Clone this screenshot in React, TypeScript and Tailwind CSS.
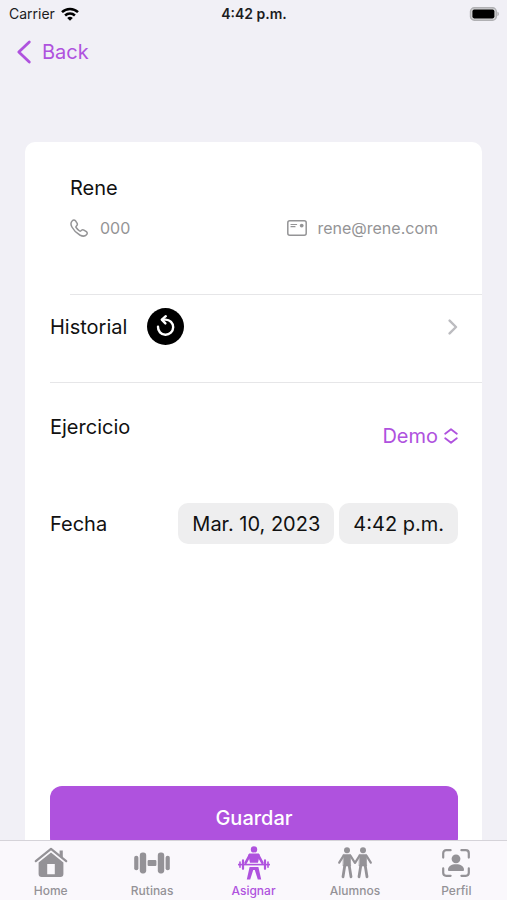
import { useState } from "react";
import type { ReactNode } from "react";

function HomeIcon() {
  return (
    <svg width="34" height="32" viewBox="0 0 34 32" fill="currentColor" aria-hidden="true">
      <path d="M1.8 14.2 17 1.8l15.2 12.4" fill="none" stroke="currentColor" strokeWidth="2.2" strokeLinecap="round" strokeLinejoin="round" />
      <path d="M25.6 3.4h3.2v8l-3.2-2.6Z" />
      <path fillRule="evenodd" d="M17 5.4 29.4 15.600V27a3 3 0 0 1-3 3H7.600a3 3 0 0 1-3-3V15.600ZM13.200 17v10.200h7.600V17Z" />
    </svg>
  );
}

function DumbbellIcon() {
  return (
    <svg width="36" height="32" viewBox="0 0 36 32" fill="currentColor" aria-hidden="true">
      <rect x="0.2" y="8.8" width="4.2" height="14.4" rx="2" />
      <rect x="5.8" y="5.6" width="6.4" height="20.8" rx="2.8" />
      <rect x="13.6" y="13" width="8.8" height="6" rx="1" />
      <rect x="23.8" y="5.6" width="6.4" height="20.8" rx="2.8" />
      <rect x="31.6" y="8.8" width="4.2" height="14.4" rx="2" />
    </svg>
  );
}

function LifterIcon() {
  return (
    <svg width="34" height="36" viewBox="0 0 34 36" fill="currentColor" stroke="currentColor" aria-hidden="true">
      <circle cx="17" cy="4.4" r="3.2" stroke="none" />
      <path d="M13.4 8.6h7.2c1.4 0 2 .6 2 2l-1.600 7.200h-8L11.400 10.600c0-1.400.6-2 2-2Z" stroke="none" />
      <path d="m12.800 10.200-4.200 7.600M21.200 10.200l4.200 7.600" strokeWidth="2.600" strokeLinecap="round" fill="none" />
      <path d="M1 19.600h32" strokeWidth="1.600" />
      <path d="M3 17v5.200M31 17v5.200" strokeWidth="1.600" strokeLinecap="round" />
      <path d="M6 15.400v8.400M28 15.400v8.400" strokeWidth="2.200" strokeLinecap="round" />
      <path d="M12.600 22h8.800l2.800 12.400h-3.400L17.800 25h-1.600l-3 9.400H9.800Z" stroke="none" />
    </svg>
  );
}

function StudentsIcon() {
  return (
    <svg width="36" height="32" viewBox="0 0 36 32" aria-hidden="true">
      {[10, 26].map((x) => (
        <g key={x} transform={`translate(${x} 0)`} fill="none" stroke="currentColor" strokeLinecap="round" strokeLinejoin="round">
          <circle cx="0" cy="3.200" r="3" fill="currentColor" stroke="none" />
          <path d="M-3.400 7.400h6.800L3.600 19h-7.200Z" fill="currentColor" strokeWidth="0.600" />
          <path d="M-2.200 18.500-4 29.800M2.200 18.500 4 29.800" strokeWidth="2.800" />
          <path d="m-3.400 8.700-4.400 7M3.400 8.700l4.400 7" strokeWidth="2.200" />
        </g>
      ))}
    </svg>
  );
}

function ProfileIcon() {
  return (
    <svg width="28" height="28" viewBox="0 0 28 28" fill="currentColor" aria-hidden="true">
      <path d="M1.2 8.600V4.200a3 3 0 0 1 3-3H8.600M19.400 1.200h4.400a3 3 0 0 1 3 3v4.400M26.800 19.400v4.400a3 3 0 0 1-3 3h-4.400M8.600 26.800H4.200a3 3 0 0 1-3-3v-4.400" fill="none" stroke="currentColor" strokeWidth="2.200" strokeLinecap="round" />
      <circle cx="14" cy="9.800" r="4.400" />
      <path d="M6 20.800c0-3.500 3.400-5.500 8-5.500s8 2 8 5.500c0 .8-.5 1.200-1.200 1.200H7.200C6.500 22 6 21.600 6 20.800Z" />
    </svg>
  );
}

function StatusBar() {
  return (
    <div className="grid h-7 grid-cols-3 items-center pr-2 pl-[9px] text-sm leading-4 text-[#1c1c1e]">
      <div className="flex items-center gap-1.5">
        <span>Carrier</span>
        <svg width="18" height="14" viewBox="0 0 18 14" fill="none" stroke="#000" strokeWidth="2.5" aria-hidden="true">
          <path d="M1 5.2a11.4 11.4 0 0 1 16 0" />
          <path d="M4.1 8.5a7 7 0 0 1 9.8 0" />
          <path d="M9 13.8 6.2 11a4 4 0 0 1 5.6 0Z" fill="#000" stroke="none" />
        </svg>
      </div>
      <span className="text-center font-semibold">4:42 p.m.</span>
      <svg className="justify-self-end" width="30" height="14" viewBox="0 0 30 14" aria-hidden="true">
        <rect x="1.5" y="0.8" width="25.8" height="12.4" rx="3.8" fill="#d4d4d6" stroke="#b0b0b3" strokeWidth="1.4" />
        <rect x="3.4" y="2.6" width="22" height="8.8" rx="1.8" fill="#000" />
        <path d="M28.4 4.8c1 .3 1.5 1.200 1.5 2.200s-.5 1.900-1.500 2.200Z" fill="#b0b0b3" />
      </svg>
    </div>
  );
}

type Tab = { label: string; icon: ReactNode };

const tabs: Tab[] = [
  { label: "Home", icon: <HomeIcon /> },
  { label: "Rutinas", icon: <DumbbellIcon /> },
  { label: "Asignar", icon: <LifterIcon /> },
  { label: "Alumnos", icon: <StudentsIcon /> },
  { label: "Perfil", icon: <ProfileIcon /> },
];

export default function App() {
  const [exercise, setExercise] = useState("Demo");
  const [activeTab, setActiveTab] = useState("Asignar");

  return (
    <div className="flex h-screen flex-col bg-[#f1f0f6] font-['Inter','Liberation_Sans',sans-serif] text-[#111]">
      <StatusBar />

      {/* Navigation */}
      <nav className="flex h-12 shrink-0 items-center px-4">
        <a href="#" className="flex items-center gap-2.5 text-xl leading-7 text-[#af52de]">
          <svg width="16" height="24" viewBox="0 0 16 24" fill="none" stroke="currentColor" strokeWidth="2.8" strokeLinecap="round" strokeLinejoin="round" aria-hidden="true">
            <path d="M13.3 2 2.8 12l10.5 10" />
          </svg>
          Back
        </a>
      </nav>

      {/* Assignment form */}
      <main className="min-h-0 flex-1 overflow-hidden px-[25px] pt-[66px]">
        <form className="min-h-full rounded-t-[10px] bg-white text-xl leading-7" onSubmit={(e) => e.preventDefault()}>
          <section className="ml-[45px] border-b border-[#e6e6e8] pt-8 pr-11 pb-[54px]">
            <h1>Rene</h1>
            <div className="mt-3.5 flex items-center justify-between text-base leading-6 text-[#949496]">
              <span className="flex items-center gap-3">
                <svg width="18" height="18" viewBox="0 0 18 18" fill="none" stroke="currentColor" strokeWidth="1.5" strokeLinejoin="round" aria-hidden="true">
                  <path d="M2.3 1.7C3.3.6 4.6.6 5.4 1.7L7 4.2c.6.9.5 1.6-.2 2.4l-.7.8c-.3.4-.3.7 0 1.1.9 1.3 2.2 2.6 3.5 3.5.4.3.8.3 1.1 0l.8-.7c.8-.7 1.5-.8 2.4-.2l2.5 1.6c1.1.8 1.100 2.100.1 3.100-1.600 1.700-3.900 1.700-6.700.2C6.500 14.100 3.600 11.200 1.900 8 .6 5.500.7 3.200 2.300 1.700Z" />
                </svg>
                000
              </span>
              <span className="flex items-center gap-2.5">
                <svg width="20" height="16" viewBox="0 0 20 16" fill="none" stroke="currentColor" aria-hidden="true">
                  <rect x="0.8" y="0.8" width="18.4" height="14.4" rx="2" strokeWidth="1.5" />
                  <path d="M4 4.5h5.600M4 6.700h4" strokeWidth="1.200" strokeLinecap="round" />
                  <circle cx="14.7" cy="5.6" r="1.9" fill="currentColor" stroke="none" />
                </svg>
                rene@rene.com
              </span>
            </div>
          </section>

          <section className="ml-[25px] border-b border-[#e6e6e8] pt-[13px] pr-6 pb-[37px]">
            <button type="button" className="flex w-full items-center">
              <span>Historial</span>
              <svg className="ml-5" width="37" height="37" viewBox="0 0 37 37" aria-hidden="true">
                <circle cx="18.5" cy="18.5" r="18.5" fill="#000" />
                <path d="M11 18.800a7.600 7.600 0 1 0 7.600-7.200h-3" fill="none" stroke="#fff" strokeWidth="2.400" strokeLinecap="round" />
                <path d="m18.800 8.200-4 3.400 3.600 3.800" fill="none" stroke="#fff" strokeWidth="2.400" strokeLinecap="round" strokeLinejoin="round" />
              </svg>
              <svg className="ml-auto" width="10" height="16" viewBox="0 0 10 16" fill="none" stroke="#bcbcc0" strokeWidth="2.4" strokeLinecap="round" strokeLinejoin="round" aria-hidden="true">
                <path d="m1.6 1.6 6.4 6.4-6.4 6.4" />
              </svg>
            </button>
          </section>

          <section className="pt-[30px] pr-6 pl-[25px]">
            <div className="flex h-[46px] items-center justify-between">
              <label htmlFor="exercise" className="self-start">Ejercicio</label>
              <span className="flex items-center gap-1.5 text-[#af52de]">
                <select
                  id="exercise"
                  className="appearance-none bg-transparent [field-sizing:content]"
                  value={exercise}
                  onChange={(e) => setExercise(e.target.value)}
                >
                  <option>Demo</option>
                </select>
                <svg width="14" height="16" viewBox="0 0 14 16" fill="none" stroke="currentColor" strokeWidth="1.8" strokeLinecap="round" strokeLinejoin="round" aria-hidden="true">
                  <path d="M1.2 5.7 7 1.2l5.8 4.5M1.2 10.3 7 14.8l5.8-4.5" />
                </svg>
              </span>
            </div>

            <div className="mt-11 flex items-center justify-between" role="group" aria-labelledby="date-label">
              <span id="date-label">Fecha</span>
              <div className="flex gap-[5px]">
                <button type="button" className="h-[41px] rounded-[10px] bg-[#eeeeef] px-3.5">Mar. 10, 2023</button>
                <button type="button" className="h-[41px] rounded-[10px] bg-[#eeeeef] px-3.5">4:42 p.m.</button>
              </div>
            </div>

            <button type="submit" className="mt-[242px] h-16 w-full rounded-xl bg-[#af52de] font-medium text-white">
              Guardar
            </button>
          </section>
        </form>
      </main>

      {/* Tab bar */}
      <footer className="flex h-[60px] shrink-0 border-t border-[#d5d3d9] bg-[#faf8fc]">
        {tabs.map((tab) => (
          <button
            key={tab.label}
            type="button"
            onClick={() => setActiveTab(tab.label)}
            className={`flex flex-1 flex-col items-center gap-0.5 pt-1 text-xs leading-4 font-medium ${
              tab.label === activeTab ? "text-[#af52de]" : "text-[#949297]"
            }`}
          >
            <span className="flex h-9 items-center">{tab.icon}</span>
            {tab.label}
          </button>
        ))}
      </footer>
    </div>
  );
}
